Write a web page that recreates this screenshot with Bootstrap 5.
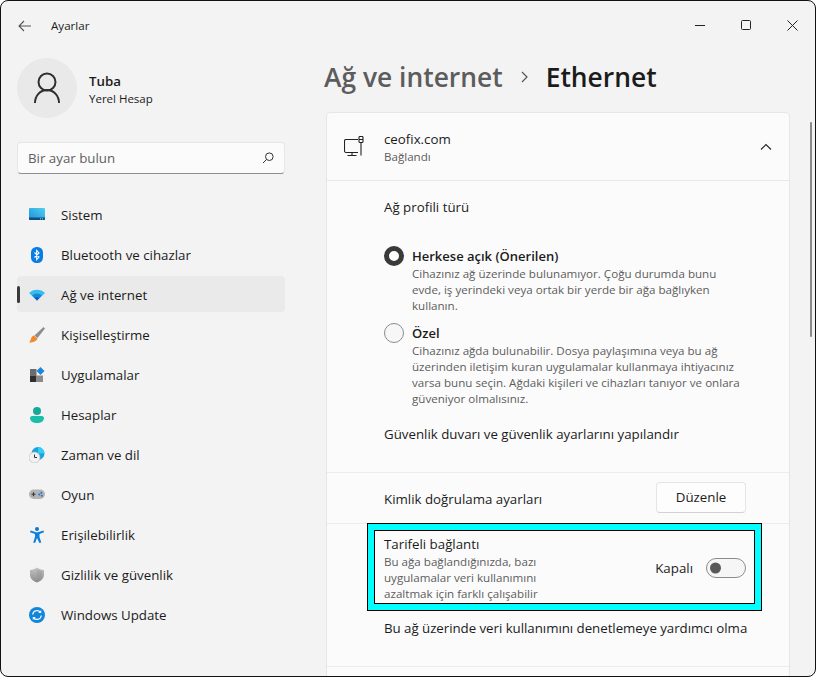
<!DOCTYPE html>
<html lang="tr">
<head>
<meta charset="utf-8">
<title>Ayarlar</title>
<link rel="stylesheet" href="https://cdn.jsdelivr.net/npm/bootstrap@5.3.0/dist/css/bootstrap.min.css">
<style>
html,body{height:100%;margin:0;overflow:hidden;background:#fff}
body{font-family:"Open Sans","Noto Sans",sans-serif;font-size:13.3px;color:#1b1b1b;line-height:20px}
.win{width:816px;height:677px;border:1px solid #111;border-radius:8px;background:#f3f3f3;overflow:hidden}
.tbar{height:49px;flex:none}
.tb-back{margin-left:17px;margin-right:19px}
.tb-title{font-size:11.6px}
.tb-ctl{width:46px;justify-content:center;margin-top:-1px}
.side{width:301px;flex:none;padding-left:16px}
.uhead{gap:12px}
.avatar{width:60px;height:60px;background:#e9e9e9;margin-top:8px;flex:none}
.uname{font-weight:600;line-height:20px}
.usub{font-size:11.5px;line-height:16px}
.utxt{margin-top:10px}
.sbox{width:268px;height:32px;margin-top:24px;background:#fbfbfb;border:1px solid #e6e6e6;border-bottom-color:#8f8f8f;border-radius:4px;padding:0 10px}
.sbox .form-control{border:0;background:transparent;padding:1px 0 0;font-size:13.3px;box-shadow:none;color:#5f5f5f}
.sbox .form-control::placeholder{color:#5f5f5f;opacity:1}
.navlist{margin-top:22px;width:268px;gap:4px}
.navit{height:36px;padding:1px 0 0 12px;border-radius:4px;color:#1b1b1b;text-decoration:none;gap:16px}
.navit.on{background:#eaeaea}
.navit.on::before{content:"";position:absolute;left:0;top:10px;width:3px;height:17px;border-radius:2px;background:#3a3a3a}
.nico{width:16px;height:16px;flex:none;display:block}
.mainp{flex:1 1 auto;min-width:0;padding-top:7px}
.crumb{height:40px;margin:0 0 15px 22px;font-size:26.4px;line-height:40px;font-weight:600;gap:17px;color:#5c5c5c}
.crumb-now{color:#1b1b1b}
.pcard{width:464px;margin-left:24px;height:700px;background:#fbfbfb;border:1px solid #e6e6e6;border-radius:4px}
.phead{height:68px;border-bottom:1px solid #e8e8e8;padding:0 17px;flex:none}
.phead-ic{margin-right:20px;flex:none}
.sub{font-size:11.6px;line-height:16px;color:#5d5d5d}
.sec1{padding:16px 44px 28px 57px;border-bottom:1px solid #ececec}
.optrow{margin:0;padding:0;min-height:0;display:flex;gap:8px}
.optrow.gap-a{margin-top:29px}
.optrow.gap-b{margin-top:9px}
.gap-c{margin-top:17px}
.optrow .form-check-input{float:none;margin:0;flex:none;width:20px;height:20px;background-color:#f7f7f7;border:1px solid #8b8b8b;background-image:none;box-shadow:none}
.optrow .form-check-input:checked{background-color:#fff;border:5px solid #3a3a3a}
.optlab{font-weight:600;font-size:13px}
.sec2{height:51px;padding:0 43px 0 57px;border-bottom:1px solid #ececec;flex:none}
.sec2-lab{margin-top:2px}
.btn-du{width:90px;height:31px;padding:0;margin-top:-1px;font-size:13.3px;background:#fdfdfd;border:1px solid #e5e5e5;border-bottom-color:#d2d2d2;border-radius:4px;color:#1b1b1b}
.sec3{height:88px;padding:10px 43px 0 57px;flex:none}
.sec3-txt{width:190px}
.sec3-ctl{margin-top:24px}
.hl{position:absolute;left:40px;top:-1px;width:395px;height:88px;border:1px solid #000;box-shadow:inset 0 0 0 6px #0ff,inset 0 0 0 7px #000;pointer-events:none}
.kap{margin-right:13px}
.swi{margin:0;padding:0;min-height:0;display:block;margin-top:-1px}
.swi .form-check-input,.swi .form-check-input:focus{float:none;margin:0;width:40px;height:20px;display:block;border:1px solid #8b8b8b;background-color:#f6f6f6;box-shadow:none;background-position:left center;background-size:auto 100%;background-image:url("data:image/svg+xml,%3csvg xmlns='http://www.w3.org/2000/svg' viewBox='0 0 18 18'%3e%3ccircle cx='8.500' cy='9' r='5.500' fill='%23595959'/%3e%3c/svg%3e")}
.sec4{height:55px;padding:6px 43px 0 57px;border-bottom:1px solid #ececec;white-space:nowrap;overflow:hidden;flex:none;letter-spacing:-.04px}
.scb{position:absolute;right:3px;top:121px;width:2px;height:215px;background:#8a8a8a;border-radius:1px;z-index:5}
</style>
</head>
<body>
<div class="win d-flex flex-column position-relative">
  <div class="tbar d-flex align-items-center">
    <svg class="tb-back" width="14" height="12" viewBox="0 0 14 12" fill="none" stroke="#555" stroke-width="1.100"><path d="M13 6H1M6 1 1 6l5 5"/></svg>
    <span class="tb-title">Ayarlar</span>
    <div class="ms-auto d-flex">
      <div class="tb-ctl d-flex"><svg width="10" height="10" viewBox="0 0 10 10"><path d="M0 5.500h10" stroke="#222"/></svg></div>
      <div class="tb-ctl d-flex"><svg width="10" height="10" viewBox="0 0 10 10"><rect x=".5" y=".5" width="9" height="9" rx="1" fill="none" stroke="#222"/></svg></div>
      <div class="tb-ctl d-flex"><svg width="11" height="11" viewBox="0 0 11 11"><path d="M.5.5l10 10M10.500.5l-10 10" stroke="#222"/></svg></div>
    </div>
  </div>
  <div class="d-flex flex-grow-1 overflow-hidden">
    <aside class="side">
      <div class="uhead d-flex align-items-center mb-0">
        <div class="avatar rounded-circle d-flex align-items-center justify-content-center">
          <svg width="28" height="32" viewBox="0 0 28 32" fill="none" stroke="#2f2f2f" stroke-width="2"><circle cx="14" cy="10" r="8.500"/><path d="M2 31c0-7 5-13 12-13s12 6 12 13"/></svg>
        </div>
        <div class="utxt">
          <div class="uname">Tuba</div>
          <div class="usub">Yerel Hesap</div>
        </div>
      </div>
      <div class="sbox d-flex align-items-center">
        <input class="form-control" type="text" placeholder="Bir ayar bulun">
        <svg width="12" height="12" viewBox="0 0 12 12" fill="none" stroke="#333" class="flex-shrink-0"><circle cx="7.300" cy="4.700" r="3.800"/><path d="M4.600 7.400 1 11"/></svg>
      </div>
      <nav class="navlist d-flex flex-column">
        <a class="navit d-flex align-items-center" href="#">
          <svg class="nico" viewBox="0 0 16 16"><defs><linearGradient id="g1" x1="0" y1="1" x2="1" y2="0"><stop offset="0" stop-color="#1e8fd8"/><stop offset="1" stop-color="#4fd0f2"/></linearGradient><linearGradient id="g2" x1="0" y1="0" x2="0" y2="1"><stop offset="0" stop-color="#c4c4c4"/><stop offset="1" stop-color="#8c8c8c"/></linearGradient></defs><rect y="1" width="16" height="12" rx="1" fill="url(#g1)"/><path d="M0 10.500h16V12a1 1 0 0 1-1 1H1a1 1 0 0 1-1-1z" fill="#0d4f80"/><path d="M11 11.800h1M13 11.800h1" stroke="#a8d4ee"/></svg>
          <span>Sistem</span>
        </a>
        <a class="navit d-flex align-items-center" href="#">
          <svg class="nico" viewBox="0 0 16 16"><rect x="2" y="0" width="12" height="16" rx="5.500" fill="#0a7ce6"/><path d="M5.500 5.500 10 10l-2.300 2.500v-9L10 6 5.500 10.500" fill="none" stroke="#fff" stroke-width="1.100"/></svg>
          <span>Bluetooth ve cihazlar</span>
        </a>
        <a class="navit on d-flex align-items-center position-relative" href="#">
          <svg class="nico" viewBox="0 0 16 16"><path d="M0 6C4 1.500 12 1.500 16 6l-8 7.500z" fill="#35bdf0"/><path d="M3 8.500c3-2.700 7-2.700 10 0L8 13.500z" fill="#1787dc"/><path d="M5.500 10.800c1.500-1.200 3.500-1.200 5 0L8 13.500z" fill="#0a5fb4"/></svg>
          <span>Ağ ve internet</span>
        </a>
        <a class="navit d-flex align-items-center" href="#">
          <svg class="nico" viewBox="0 0 16 16"><path d="M14.500 0 16 1.500 8.500 11 5.500 8.500z" fill="#8d8d8d"/><path d="M5 8.500 8.500 11.500C7.500 14.500 3 15.800 0 15.500c2-1.500 1.500-6 5-7z" fill="#ef8a2d"/></svg>
          <span>Kişiselleştirme</span>
        </a>
        <a class="navit d-flex align-items-center" href="#">
          <svg class="nico" viewBox="0 0 16 16"><rect x="1" y="2" width="6.500" height="6.500" fill="#6c6c6c"/><rect x="1" y="8.500" width="6.500" height="6.500" fill="#2f2f2f"/><rect x="7.500" y="8.500" width="6.500" height="6.500" fill="#8a8a8a"/><path d="M11.500 0 15.500 4l-4 4-4-4z" fill="#1a86e0"/></svg>
          <span>Uygulamalar</span>
        </a>
        <a class="navit d-flex align-items-center" href="#">
          <svg class="nico" viewBox="0 0 16 16"><circle cx="8" cy="4" r="4" fill="#16a99a"/><path d="M1 11c0-1 1-2 2-2h10c1 0 2 1 2 2 0 3-3 5-7 5s-7-2-7-5z" fill="#19bfa9"/></svg>
          <span>Hesaplar</span>
        </a>
        <a class="navit d-flex align-items-center" href="#">
          <svg class="nico" viewBox="0 0 16 16"><circle cx="9" cy="6.500" r="6.500" fill="#1e9fe0"/><path d="M9 0a6.500 6.500 0 0 1 6.500 6.500H9z" fill="#2fd0f0"/><circle cx="5.500" cy="10.500" r="5.500" fill="#f1f1f1" stroke="#b5b5b5" stroke-width=".6"/><path d="M5.500 7.500v3h2.500" fill="none" stroke="#333"/></svg>
          <span>Zaman ve dil</span>
        </a>
        <a class="navit d-flex align-items-center" href="#">
          <svg class="nico" viewBox="0 0 16 16"><rect y="2.500" width="16" height="9.500" rx="4.700" fill="#b4b4b4"/><path d="M2.500 7.200h4M4.500 5.200v4" stroke="#333" stroke-width="1.100"/><circle cx="10.300" cy="7.500" r="1" fill="#1a76d2"/><circle cx="12.300" cy="5.700" r="1" fill="#1a76d2"/><circle cx="12.800" cy="8.700" r="1" fill="#1a76d2"/></svg>
          <span>Oyun</span>
        </a>
        <a class="navit d-flex align-items-center" href="#">
          <svg class="nico" viewBox="0 0 16 16"><circle cx="8" cy="2" r="2" fill="#0f76c8"/><path d="M1.500 3.500 8 5.500l6.500-2 .5 1.800-4.500 1.700V10l1.800 5.500-1.900.5L8 11l-1.900 5-1.900-.5L6 10V7L1 5.300z" fill="#0f7fd8"/></svg>
          <span>Erişilebilirlik</span>
        </a>
        <a class="navit d-flex align-items-center" href="#">
          <svg class="nico" viewBox="0 0 16 16"><path d="M8 .5c2 1.500 4.500 2.200 7 2.500v4.500c0 4-3 6.800-7 8-4-1.200-7-4-7-8V3c2.500-.3 5-1 7-2.500z" fill="url(#g2)"/><path d="M8 2.500c1.500 1 3.300 1.500 5 1.800v3.200c0 3-2 5-5 6.200z" fill="#8f8f8f" opacity=".35"/></svg>
          <span>Gizlilik ve güvenlik</span>
        </a>
        <a class="navit d-flex align-items-center" href="#">
          <svg class="nico" viewBox="0 0 16 16"><circle cx="8" cy="8" r="8" fill="#0f86dc"/><path d="M3.700 7.500A4.400 4.400 0 0 1 11.500 5.200M12.300 8.500A4.400 4.400 0 0 1 4.500 10.800" fill="none" stroke="#fff" stroke-width="1.200"/><path d="M12.200 3v3h-3zM3.800 13v-3h3z" fill="#fff"/></svg>
          <span>Windows Update</span>
        </a>
      </nav>
    </aside>
    <main class="mainp">
      <div class="crumb d-flex align-items-center">
        <span>Ağ ve internet</span>
        <svg width="9" height="12" viewBox="0 0 9 12" fill="none" stroke="#555" stroke-width="1.200"><path d="M2 1l5 5-5 5"/></svg>
        <span class="crumb-now">Ethernet</span>
      </div>
      <section class="pcard d-flex flex-column">
        <div class="phead d-flex align-items-center">
          <svg class="phead-ic" width="20" height="22" viewBox="0 0 20 22" fill="none" stroke="#222" stroke-width="1.100"><path d="M14 3.500H2A1.500 1.500 0 0 0 .5 5v10A1.500 1.500 0 0 0 2 16.500h12M8 16.500v3M3.500 19.500h9"/><rect x="15" y=".5" width="4" height="6" rx="1"/><path d="M15 3.500h4M17 6.500v13"/></svg>
          <div>
            <div>ceofix.com</div>
            <div class="sub">Bağlandı</div>
          </div>
          <svg class="ms-auto" width="12" height="7" viewBox="0 0 12 7" fill="none" stroke="#222" stroke-width="1.100"><path d="M1 6.500l5-5 5 5"/></svg>
        </div>
        <div class="sec1">
          <div>Ağ profili türü</div>
          <div class="form-check optrow gap-a">
            <input class="form-check-input" type="radio" name="p" id="r1" checked>
            <div>
              <label class="optlab d-block" for="r1">Herkese açık (Önerilen)</label>
              <div class="sub">Cihazınız ağ üzerinde bulunamıyor. Çoğu durumda bunu evde, iş yerindeki veya ortak bir yerde bir ağa bağlıyken kullanın.</div>
            </div>
          </div>
          <div class="form-check optrow gap-b">
            <input class="form-check-input" type="radio" name="p" id="r2">
            <div>
              <label class="optlab d-block" for="r2">Özel</label>
              <div class="sub">Cihazınız ağda bulunabilir. Dosya paylaşımına veya bu ağ üzerinden iletişim kuran uygulamalar kullanmaya ihtiyacınız varsa bunu seçin. Ağdaki kişileri ve cihazları tanıyor ve onlara güveniyor olmalısınız.</div>
            </div>
          </div>
          <div class="gap-c">Güvenlik duvarı ve güvenlik ayarlarını yapılandır</div>
        </div>
        <div class="sec2 d-flex align-items-center justify-content-between">
          <span class="sec2-lab">Kimlik doğrulama ayarları</span>
          <button class="btn btn-du" type="button">Düzenle</button>
        </div>
        <div class="sec3 d-flex position-relative">
          <div class="sec3-txt">
            <div>Tarifeli bağlantı</div>
            <div class="sub">Bu ağa bağlandığınızda, bazı uygulamalar veri kullanımını azaltmak için farklı çalışabilir</div>
          </div>
          <div class="sec3-ctl ms-auto d-flex align-items-center align-self-start">
            <span class="kap">Kapalı</span>
            <div class="form-check form-switch swi"><input class="form-check-input" type="checkbox" role="switch" aria-label="Tarifeli bağlantı"></div>
          </div>
          <div class="hl"></div>
        </div>
        <div class="sec4">Bu ağ üzerinde veri kullanımını denetlemeye yardımcı olma</div>
      </section>
    </main>
  </div>
  <div class="scb"></div>
</div>
<script src="https://cdn.jsdelivr.net/npm/bootstrap@5.3.0/dist/js/bootstrap.bundle.min.js"></script>
</body>
</html>
